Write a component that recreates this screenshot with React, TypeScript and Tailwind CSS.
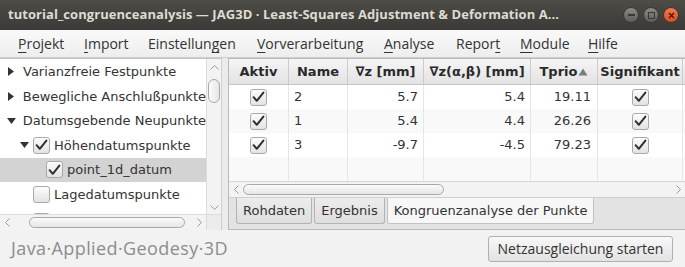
import React from "react";

const DV = "font-['DejaVu_Sans',sans-serif]";
const OS = "font-['Open_Sans',sans-serif]";

function Chevron({ dir }: { dir: "l" | "r" | "u" | "d" }) {
  const pts: Record<string, string> = {
    l: "4.5,0.5 0.5,4.5 4.5,8.5",
    r: "0.5,0.5 4.5,4.5 0.5,8.5",
    u: "0.5,4.5 4.5,0.5 8.5,4.5",
    d: "0.5,0.5 4.5,4.5 8.5,0.5",
  };
  const horiz = dir === "l" || dir === "r";
  return (
    <svg width={horiz ? 5 : 9} height={horiz ? 9 : 5} viewBox={horiz ? "0 0 5 9" : "0 0 9 5"}>
      <polyline points={pts[dir]} fill="none" stroke="#9a9a9a" strokeWidth="1" />
    </svg>
  );
}

function Check({ checked }: { checked: boolean }) {
  return (
    <div className="w-[17px] h-[17px] shrink-0 rounded-[3px] border border-[#a9a9a9] bg-gradient-to-b from-[#fcfcfc] to-[#e3e3e3] flex items-center justify-center shadow-[inset_0_1px_0_#ffffff]">
      {checked && (
        <svg width="13" height="12" viewBox="0 0 13 12">
          <path d="M1.6 6.2 L4.8 9.8 L11.4 1.6" fill="none" stroke="#2e2e2e" strokeWidth="2" strokeLinecap="round" strokeLinejoin="round" />
        </svg>
      )}
    </div>
  );
}

function TriRight() {
  return (
    <svg width="6" height="9" viewBox="0 0 6 9">
      <polygon points="0,0 6,4.5 0,9" fill="#333" />
    </svg>
  );
}
function TriDown() {
  return (
    <svg width="9" height="6" viewBox="0 0 9 6">
      <polygon points="0,0 9,0 4.5,6" fill="#333" />
    </svg>
  );
}

function U({ children }: { children: React.ReactNode }) {
  return <span className="underline underline-offset-[3px] decoration-[1px]">{children}</span>;
}

const menu: { el: React.ReactNode; w: string }[] = [
  { el: <><U>P</U>rojekt</>, w: "w-[66px]" },
  { el: <><U>I</U>mport</>, w: "w-[64px]" },
  { el: <>Einstellun<U>g</U>en</>, w: "w-[109px]" },
  { el: <><U>V</U>orverarbeitung</>, w: "w-[127px]" },
  { el: <><U>A</U>nalyse</>, w: "w-[72px]" },
  { el: <>Repor<U>t</U></>, w: "w-[64px]" },
  { el: <><U>M</U>odule</>, w: "w-[68px]" },
  { el: <><U>H</U>ilfe</>, w: "w-[40px]" },
];

const rows = [
  { name: "2", dz: "5.7", dzab: "5.4", t: "19.11" },
  { name: "1", dz: "5.4", dzab: "4.4", t: "26.26" },
  { name: "3", dz: "-9.7", dzab: "-4.5", t: "79.23" },
];

const cols = ["w-[60px]", "w-[59px]", "w-[76px]", "w-[107px]", "w-[67px]", "w-[85px]"];

export default function App() {
  return (
    <div className="w-[685px] h-[267px] bg-[#f2f2f2] flex flex-col overflow-hidden">
      {/* Title bar */}
      <div className="h-[30px] shrink-0 bg-gradient-to-b from-[#4d4c47] to-[#3b3a36] flex items-center pl-[8px] pr-[6px]">
        <div className={`flex-1 whitespace-nowrap overflow-hidden text-[13px] font-bold text-[#dfdbd2] tracking-[0.05px] ${OS}`}>
          tutorial_congruenceanalysis — JAG3D · Least-Squares Adjustment &amp; Deformation A...
        </div>
        <div className="flex items-center gap-[4px] ml-[4px]">
          <div className="w-[16px] h-[16px] rounded-full bg-gradient-to-b from-[#8a8984] to-[#5f5e5a] border border-[#3a3935] flex items-center justify-center">
            <div className="w-[7px] h-[1.5px] bg-[#3a3935]" />
          </div>
          <div className="w-[16px] h-[16px] rounded-full bg-gradient-to-b from-[#8a8984] to-[#5f5e5a] border border-[#3a3935] flex items-center justify-center">
            <div className="w-[7px] h-[7px] border border-[#3a3935]" />
          </div>
          <div className="w-[16px] h-[16px] rounded-full bg-gradient-to-b from-[#f47a4d] to-[#df4a1c] border border-[#3a3935] flex items-center justify-center">
            <svg width="7" height="7" viewBox="0 0 7 7">
              <path d="M1 1 L6 6 M6 1 L1 6" stroke="#4a1a0a" strokeWidth="1.5" />
            </svg>
          </div>
        </div>
      </div>

      {/* Menu bar */}
      <div className={`h-[28px] shrink-0 bg-gradient-to-b from-[#fafafa] to-[#ededed] border-b border-[#cdcdcd] flex items-center pl-[18px] text-[14px] text-[#333333] ${OS}`}>
        {menu.map((m, i) => (
          <div key={i} className={`${m.w} shrink-0 whitespace-nowrap`}>{m.el}</div>
        ))}
      </div>

      {/* Content */}
      <div className={`h-[172px] shrink-0 flex ${DV} text-[13px] text-[#333333]`}>
        {/* Left pane */}
        <div className="w-[221px] shrink-0 flex flex-col border-t border-[#c4c4c4]">
          <div className="h-[155px] flex">
            <div className="w-[206px] bg-white overflow-hidden flex flex-col pt-[0.5px]">
              <div className="h-[24.5px] shrink-0 flex items-center pl-[8px] whitespace-nowrap">
                <div className="w-[15px] flex items-center"><TriRight /></div>
                <span>Varianzfreie Festpunkte</span>
              </div>
              <div className="h-[24.5px] shrink-0 flex items-center pl-[8px] whitespace-nowrap">
                <div className="w-[15px] flex items-center"><TriRight /></div>
                <span>Bewegliche Anschlußpunkte</span>
              </div>
              <div className="h-[24.5px] shrink-0 flex items-center pl-[7px] whitespace-nowrap">
                <div className="w-[16px] flex items-center"><TriDown /></div>
                <span>Datumsgebende Neupunkte</span>
              </div>
              <div className="h-[24.5px] shrink-0 flex items-center pl-[20px] whitespace-nowrap">
                <div className="w-[13px] flex items-center"><TriDown /></div>
                <Check checked />
                <span className="ml-[4px]">Höhendatumspunkte</span>
              </div>
              <div className="h-[24.5px] shrink-0 flex items-center pl-[46px] whitespace-nowrap bg-[#d3d3d3]">
                <Check checked />
                <span className="ml-[4px]">point_1d_datum</span>
              </div>
              <div className="h-[24.5px] shrink-0 flex items-center pl-[33px] whitespace-nowrap">
                <Check checked={false} />
                <span className="ml-[4px]">Lagedatumspunkte</span>
              </div>
              <div className="h-[24.5px] shrink-0 flex items-start pt-[6.5px] pl-[33px] whitespace-nowrap">
                <Check checked={false} />
              </div>
            </div>
            {/* vertical scrollbar */}
            <div className="w-[15px] bg-[#f3f3f3] border-l border-[#dcdcdc] flex flex-col items-center">
              <div className="h-[14px] flex items-center justify-center pt-[2px]"><Chevron dir="u" /></div>
              <div className="flex-1 w-full relative">
                <div className="mt-[6px] mx-auto w-[12px] h-[24px] rounded-[6px] border border-[#a8a8a8] bg-gradient-to-r from-[#fbfbfb] to-[#e6e6e6]" />
              </div>
              <div className="h-[14px] flex items-center justify-center"><Chevron dir="d" /></div>
            </div>
          </div>
          <div className="h-[16px] flex">
            <div className="w-[206px] bg-[#f3f3f3] border-t border-[#dcdcdc] flex items-center">
              <div className="w-[14px] flex justify-center"><Chevron dir="l" /></div>
              <div className="flex-1 flex items-center">
                <div className="ml-[15px] w-[156px] h-[11px] rounded-[6px] border border-[#a8a8a8] bg-gradient-to-b from-[#fbfbfb] to-[#e6e6e6]" />
              </div>
              <div className="w-[14px] flex justify-center"><Chevron dir="r" /></div>
            </div>
            <div className="w-[15px] bg-[#ececec] border-t border-l border-[#dcdcdc]" />
          </div>
        </div>

        {/* Divider */}
        <div className="w-[7px] shrink-0 bg-[#ebebeb] border-l border-[#cfcfcf]" />

        {/* Right pane */}
        <div className="w-[457px] shrink-0 flex flex-col border-t border-l border-b border-[#b9b9b9]">
          {/* header */}
          <div className="h-[26px] shrink-0 flex bg-gradient-to-b from-[#f5f5f5] to-[#e3e3e3] border-b border-[#c6c6c6] font-bold text-[#2a2a2a]">
            {["Aktiv", "Name", "∇z [mm]", "∇z(α,β) [mm]"].map((h, i) => (
              <div key={i} className={`${cols[i]} shrink-0 border-r border-[#cbcbcb] flex items-center justify-center whitespace-nowrap`}>{h}</div>
            ))}
            <div className={`${cols[4]} shrink-0 border-r border-[#cbcbcb] flex items-center justify-center whitespace-nowrap`}>
              Tprio
              <svg width="10" height="8" viewBox="0 0 10 8" className="ml-[1px]">
                <polygon points="0.5,7.5 9.5,7.5 5,0.5" fill="#7b7b7b" />
              </svg>
            </div>
            <div className={`${cols[5]} shrink-0 border-r border-[#cbcbcb] flex items-center justify-center whitespace-nowrap`}>Signifikant</div>
          </div>
          {/* rows */}
          {[0, 1, 2, 3].map((ri) => {
            const r = rows[ri];
            const bg = ri % 2 === 0 ? "bg-white" : "bg-[#f9f9f9]";
            return (
              <div key={ri} className={`h-[24px] shrink-0 flex ${bg}`}>
                <div className={`${cols[0]} shrink-0 border-r border-[#e6e6e6] flex items-center justify-center`}>
                  {r && <Check checked />}
                </div>
                <div className={`${cols[1]} shrink-0 border-r border-[#e6e6e6] flex items-center pl-[5px]`}>{r?.name}</div>
                <div className={`${cols[2]} shrink-0 border-r border-[#e6e6e6] flex items-center justify-end pr-[5px]`}>{r?.dz}</div>
                <div className={`${cols[3]} shrink-0 border-r border-[#e6e6e6] flex items-center justify-end pr-[5px]`}>{r?.dzab}</div>
                <div className={`${cols[4]} shrink-0 border-r border-[#e6e6e6] flex items-center justify-end pr-[6px]`}>{r?.t}</div>
                <div className={`${cols[5]} shrink-0 border-r border-[#e6e6e6] flex items-center justify-center`}>
                  {r && <Check checked />}
                </div>
              </div>
            );
          })}
          {/* horizontal scrollbar */}
          <div className="h-[16px] shrink-0 bg-[#f3f3f3] border-t border-[#d6d6d6] flex items-center">
            <div className="w-[12px] flex justify-center pl-[2px]"><Chevron dir="l" /></div>
            <div className="flex-1 flex items-center">
              <div className="ml-[2px] w-[201px] h-[11px] rounded-[6px] border border-[#a8a8a8] bg-gradient-to-b from-[#fbfbfb] to-[#e6e6e6]" />
            </div>
            <div className="w-[14px] flex justify-center"><Chevron dir="r" /></div>
          </div>
          {/* tabs */}
          <div className="h-[32px] shrink-0 bg-[#e3e3e3] border-t border-[#cfcfcf] flex items-start pl-[7px] gap-[2px]">
            <div className="h-[26px] px-[6px] flex items-center bg-gradient-to-b from-[#ececec] to-[#dedede] border border-t-0 border-[#b3b3b3] rounded-b-[3px] whitespace-nowrap">Rohdaten</div>
            <div className="h-[26px] px-[6px] flex items-center bg-gradient-to-b from-[#ececec] to-[#dedede] border border-t-0 border-[#b3b3b3] rounded-b-[3px] whitespace-nowrap">Ergebnis</div>
            <div className="h-[26px] px-[6px] flex items-center bg-[#f7f7f7] border border-t-0 border-[#c2c2c2] rounded-b-[3px] whitespace-nowrap">Kongruenzanalyse der Punkte</div>
          </div>
        </div>
      </div>

      {/* Footer */}
      <div className="flex-1 flex items-center justify-between pl-[11px] pr-[12px]">
        <div className={`text-[18px] tracking-[0.4px] text-[#8d8d8d] ${OS} whitespace-nowrap`}>Java·Applied·Geodesy·3D</div>
        <div className={`w-[185px] h-[26px] flex items-center justify-center rounded-[3px] border border-[#b0b0b0] bg-gradient-to-b from-[#f8f8f8] to-[#e2e2e2] text-[14px] text-[#333333] ${OS} whitespace-nowrap`}>
          Netzausgleichung starten
        </div>
      </div>
    </div>
  );
}
